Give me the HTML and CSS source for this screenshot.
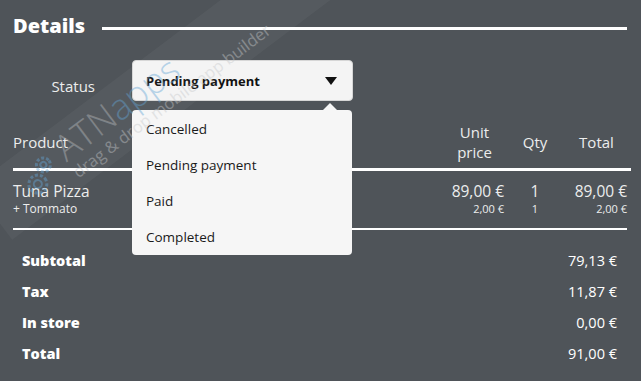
FILE: index.html
```html
<!DOCTYPE html>
<html lang="en">
<head>
    <meta charset="UTF-8">
    <meta name="viewport" content="width=device-width, initial-scale=1.0">
    <title>Order Details</title>
    <link rel="stylesheet" href="styles.css">
</head>
<body>

<div class="page">
    <div class="title-row">
        <h1>Details</h1>
        <div class="title-rule"></div>
    </div>

    <div class="status-row">
        <span class="status-label">Status</span>
        <div class="select-wrap">
            <div class="select">
                <span>Pending payment</span>
                <span class="caret"></span>
            </div>
            <ul class="dropdown">
                <li>Cancelled</li>
                <li>Pending payment</li>
                <li>Paid</li>
                <li>Completed</li>
            </ul>
        </div>
    </div>

    <div class="row head">
        <div class="cell">Product</div>
        <div class="cell center">Unit<br>price</div>
        <div class="cell center">Qty</div>
        <div class="cell center">Total</div>
    </div>
    <div class="rule thick"></div>

    <div class="row item">
        <div class="cell">Tuna Pizza<small>+ Tommato</small></div>
        <div class="cell right">89,00 €<small>2,00 €</small></div>
        <div class="cell center">1<small>1</small></div>
        <div class="cell right">89,00 €<small>2,00 €</small></div>
    </div>
    <div class="rule thin"></div>

    <div class="totals">
        <div class="total-row"><span class="label">Subtotal</span><span>79,13 €</span></div>
        <div class="total-row"><span class="label">Tax</span><span>11,87 €</span></div>
        <div class="total-row"><span class="label">In store</span><span>0,00 €</span></div>
        <div class="total-row"><span class="label">Total</span><span>91,00 €</span></div>
    </div>
</div>

<div class="watermark">
    <svg class="gears" width="44" height="40" viewBox="0 0 44 40">
        <circle cx="14" cy="24" r="9" fill="none" stroke="#6aa9d8" stroke-width="3" stroke-dasharray="3 2"/>
        <circle cx="14" cy="24" r="4" fill="none" stroke="#6aa9d8" stroke-width="2"/>
        <circle cx="30" cy="12" r="7" fill="none" stroke="#6aa9d8" stroke-width="3" stroke-dasharray="3 2"/>
        <circle cx="30" cy="12" r="3" fill="none" stroke="#6aa9d8" stroke-width="2"/>
    </svg>
    <div class="wm-text">
        <div class="wm-brand">ATN<span>apps</span></div>
        <div class="wm-tag">drag &amp; drop mobile app builder</div>
    </div>
</div>

</body>
</html>
```

FILE: styles.css
```css
body {
    margin: 0;
    background: #4f5459;
    font-family: "Open Sans", Lato, sans-serif;
    color: #eceded;
    overflow: hidden;
}
.page {
    padding: 14px 10px 0 13px;
}
.title-row {
    display: flex;
    align-items: center;
    height: 24px;
}
h1 {
    margin: 0;
    font-size: 20px;
    font-weight: 800;
    color: #fff;
    line-height: 24px;
}
.title-rule {
    flex: 1;
    height: 3px;
    background: #fff;
    margin: 4px 4px 0 17px;
}
.status-row {
    display: flex;
    align-items: flex-end;
    margin-top: 22px;
}
.status-label {
    width: 82px;
    text-align: right;
    font-size: 15px;
    padding-bottom: 5px;
    margin-right: 37px;
}
.select-wrap {
    position: relative;
}
.select {
    width: 221px;
    height: 41px;
    box-sizing: border-box;
    background: #f4f4f4;
    border: 1px solid #d6d6d6;
    border-radius: 4px;
    display: flex;
    align-items: center;
    justify-content: space-between;
    padding: 0 15px 0 13px;
    color: #111;
    font-size: 13px;
    font-weight: 700;
}
.caret {
    width: 0;
    height: 0;
    border-left: 6.5px solid transparent;
    border-right: 6.5px solid transparent;
    border-top: 8px solid #111;
    margin-top: 1px;
}
.dropdown {
    position: absolute;
    top: 50px;
    left: 0;
    width: 220px;
    margin: 0;
    padding: 1px 0 0;
    list-style: none;
    background: #f6f6f6;
    border-radius: 4px;
    z-index: 2;
    color: #1a1a1a;
    font-size: 13.5px;
}
.dropdown::before {
    content: "";
    position: absolute;
    top: -7px;
    left: 190px;
    border-left: 8px solid transparent;
    border-right: 8px solid transparent;
    border-bottom: 8px solid #f6f6f6;
}
.dropdown li {
    height: 36px;
    line-height: 36px;
    padding-left: 14px;
}
.row {
    display: grid;
    grid-template-columns: 1fr 59px 62px 61px;
    padding-right: 4px;
}
.cell small {
    display: block;
    font-size: 12px;
    line-height: 16px;
}
.center {
    text-align: center;
}
.right {
    text-align: right;
}
.head {
    margin-top: 21px;
    font-size: 15px;
    line-height: 20px;
    align-items: center;
    padding-bottom: 6px;
}
.rule {
    background: #fff;
}
.thick {
    height: 3px;
}
.thin {
    height: 2px;
    margin-right: 4px;
}
.item {
    font-size: 15.5px;
    line-height: 20px;
    padding-top: 10px;
    padding-bottom: 11px;
}
.item .right small,
.item .center small {
    font-size: 11px;
}
.totals {
    padding: 15px 14px 0 9px;
}
.total-row {
    display: flex;
    justify-content: space-between;
    height: 31px;
    line-height: 31px;
    font-size: 14.5px;
    color: #fff;
}
.label {
    font-weight: 800;
}
.watermark {
    position: absolute;
    left: -52px;
    top: 48px;
    width: 440px;
    height: 66px;
    transform: rotate(-37deg);
    transform-origin: center;
    background: rgba(255, 255, 255, 0.09);
    display: flex;
    align-items: center;
    gap: 6px;
    padding-left: 40px;
    box-sizing: border-box;
    pointer-events: none;
    z-index: 3;
    opacity: 0.45;
}
.wm-text {
    line-height: 1;
}
.wm-brand {
    font-size: 36px;
    font-weight: 300;
    color: #b9bcbf;
}
.wm-brand span {
    color: #6aa9d8;
}
.wm-tag {
    font-size: 16.5px;
    color: #c9cbcd;
    margin-top: 1px;
}
```
